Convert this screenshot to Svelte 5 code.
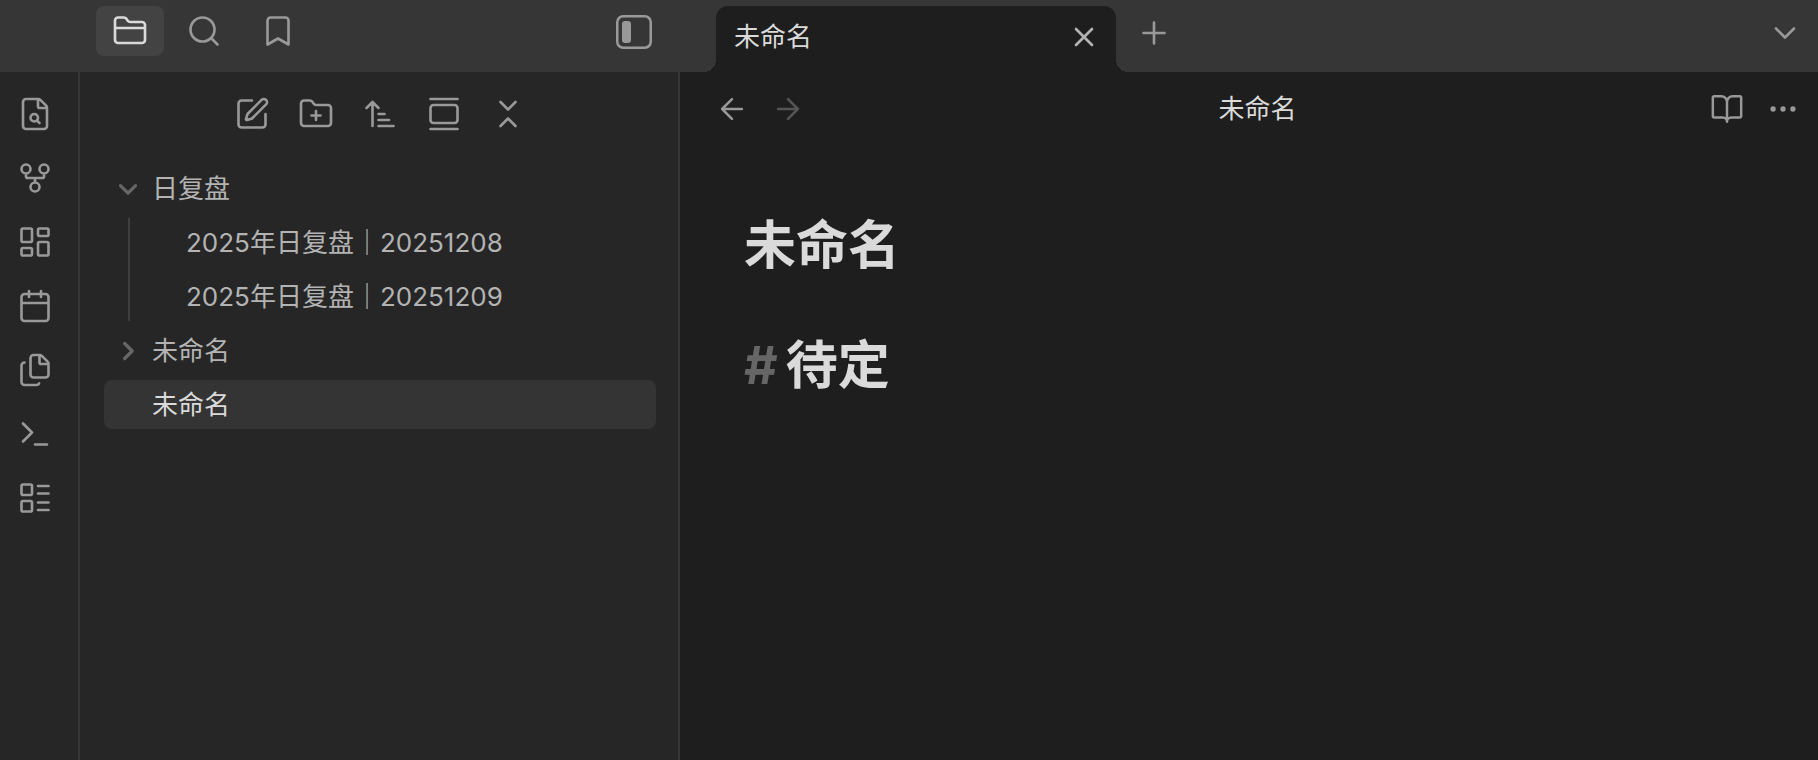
<script lang="ts">
	type IconName = keyof typeof icons;

	// 24x24 stroke icons, one path string each
	const icons = {
		folder:
			'M20 20a2 2 0 0 0 2-2V8a2 2 0 0 0-2-2h-7.9a2 2 0 0 1-1.69-.9L9.6 3.9A2 2 0 0 0 7.93 3H4a2 2 0 0 0-2 2v13a2 2 0 0 0 2 2Z M2 10h20',
		search: 'M19 11a8 8 0 1 1-16 0a8 8 0 1 1 16 0z m2 10-4.3-4.3',
		bookmark: 'm19 21-7-4-7 4V5a2 2 0 0 1 2-2h10a2 2 0 0 1 2 2v16z',
		fileSearch:
			'M6 22a2 2 0 0 1-2-2V4a2 2 0 0 1 2-2h8a2.4 2.4 0 0 1 1.704.706l3.588 3.588A2.4 2.4 0 0 1 20 8v12a2 2 0 0 1-2 2z M14 2v5a1 1 0 0 0 1 1h5 M14 14.5a2.5 2.5 0 1 1-5 0a2.5 2.5 0 1 1 5 0z M13.3 16.3 15 18',
		graph:
			'M15 18a3 3 0 1 1-6 0a3 3 0 1 1 6 0z M9 6a3 3 0 1 1-6 0a3 3 0 1 1 6 0z M21 6a3 3 0 1 1-6 0a3 3 0 1 1 6 0z M18 9v2c0 .6-.4 1-1 1H7c-.6 0-1-.4-1-1V9 M12 12v3',
		canvas:
			'M4 3h5a1 1 0 0 1 1 1v7a1 1 0 0 1-1 1H4a1 1 0 0 1-1-1V4a1 1 0 0 1 1-1z M15 3h5a1 1 0 0 1 1 1v3a1 1 0 0 1-1 1h-5a1 1 0 0 1-1-1V4a1 1 0 0 1 1-1z M15 12h5a1 1 0 0 1 1 1v7a1 1 0 0 1-1 1h-5a1 1 0 0 1-1-1v-7a1 1 0 0 1 1-1z M4 16h5a1 1 0 0 1 1 1v3a1 1 0 0 1-1 1H4a1 1 0 0 1-1-1v-3a1 1 0 0 1 1-1z',
		calendar:
			'M8 2v4 M16 2v4 M5 4h14a2 2 0 0 1 2 2v14a2 2 0 0 1-2 2H5a2 2 0 0 1-2-2V6a2 2 0 0 1 2-2z M3 10h18',
		files:
			'M15 2h-4a2 2 0 0 0-2 2v11a2 2 0 0 0 2 2h8a2 2 0 0 0 2-2V8 M16.706 2.706A2.4 2.4 0 0 0 15 2v5a1 1 0 0 0 1 1h5a2.4 2.4 0 0 0-.706-1.706z M5 7a2 2 0 0 0-2 2v11a2 2 0 0 0 2 2h8a2 2 0 0 0 1.732-1',
		terminal: 'm4 17 6-6-6-6 M12 19h8',
		list: 'M4 3h5a1 1 0 0 1 1 1v5a1 1 0 0 1-1 1H4a1 1 0 0 1-1-1V4a1 1 0 0 1 1-1z M4 14h5a1 1 0 0 1 1 1v5a1 1 0 0 1-1 1H4a1 1 0 0 1-1-1v-5a1 1 0 0 1 1-1z M14 4h7 M14 9h7 M14 15h7 M14 20h7',
		edit: 'M12 3H5a2 2 0 0 0-2 2v14a2 2 0 0 0 2 2h14a2 2 0 0 0 2-2v-7 M18.375 2.625a1 1 0 0 1 3 3l-9.013 9.014a2 2 0 0 1-.853.505l-2.873.84a.5.5 0 0 1-.62-.62l.84-2.873a2 2 0 0 1 .506-.852z',
		folderPlus:
			'M12 10v6 M9 13h6 M20 20a2 2 0 0 0 2-2V8a2 2 0 0 0-2-2h-7.9a2 2 0 0 1-1.69-.9L9.6 3.9A2 2 0 0 0 7.93 3H4a2 2 0 0 0-2 2v13a2 2 0 0 0 2 2Z',
		sort: 'm3 8 4-4 4 4 M7 4v16 M11 12h4 M11 16h7 M11 20h10',
		gallery: 'M3 2h18 M5 6h14a2 2 0 0 1 2 2v8a2 2 0 0 1-2 2H5a2 2 0 0 1-2-2V8a2 2 0 0 1 2-2z M3 22h18',
		collapse: 'm7 20 5-5 5 5 M7 4l5 5 5-5',
		close: 'M18 6 6 18 M6 6l12 12',
		plus: 'M5 12h14 M12 5v14',
		chevron: 'm6 9 6 6 6-6',
		back: 'm12 19-7-7 7-7 M19 12H5',
		forward: 'M5 12h14 M12 5l7 7-7 7',
		book: 'M12 7v14 M3 18a1 1 0 0 1-1-1V4a1 1 0 0 1 1-1h5a4 4 0 0 1 4 4 4 4 0 0 1 4-4h5a1 1 0 0 1 1 1v13a1 1 0 0 1-1 1h-6a3 3 0 0 0-3 3 3 3 0 0 0-3-3z',
		more: 'M13 12a1 1 0 1 1-2 0a1 1 0 1 1 2 0z M20 12a1 1 0 1 1-2 0a1 1 0 1 1 2 0z M6 12a1 1 0 1 1-2 0a1 1 0 1 1 2 0z'
	};

	const panels: { icon: IconName; label: string }[] = [
		{ icon: 'folder', label: '文件列表' },
		{ icon: 'search', label: '搜索' },
		{ icon: 'bookmark', label: '书签' }
	];

	const ribbon: { icon: IconName; label: string }[] = [
		{ icon: 'fileSearch', label: '快速切换' },
		{ icon: 'graph', label: '关系图谱' },
		{ icon: 'canvas', label: '新建白板' },
		{ icon: 'calendar', label: '今天的日记' },
		{ icon: 'files', label: '插入模板' },
		{ icon: 'terminal', label: '命令面板' },
		{ icon: 'list', label: '新建数据库' }
	];

	const actions: { icon: IconName; label: string }[] = [
		{ icon: 'edit', label: '新建笔记' },
		{ icon: 'folderPlus', label: '新建文件夹' },
		{ icon: 'sort', label: '排序' },
		{ icon: 'gallery', label: '自动定位当前文件' },
		{ icon: 'collapse', label: '全部折叠' }
	];

	let folders = $state([
		{ name: '日复盘', open: true, files: ['2025年日复盘｜20251208', '2025年日复盘｜20251209'] },
		{ name: '未命名', open: false, files: [] as string[] }
	]);
	let activePanel = $state<IconName>('folder');
	let activeFile = $state('未命名');
</script>

{#snippet icon(name: IconName, size = 36)}
	<svg class="icon" width={size} height={size} viewBox="0 0 24 24" aria-hidden="true">
		<path d={icons[name]} />
	</svg>
{/snippet}

<div class="app">
	<header class="titlebar">
		<div class="panel-tabs">
			{#each panels as panel (panel.icon)}
				<button
					class="panel-tab"
					class:active={activePanel === panel.icon}
					aria-label={panel.label}
					onclick={() => (activePanel = panel.icon)}
				>
					{@render icon(panel.icon)}
				</button>
			{/each}
			<button class="icon-btn toggle" aria-label="折叠侧边栏">
				<svg width="36" height="34" viewBox="0 0 36 34" aria-hidden="true">
					<rect x="1.25" y="1.25" width="33.5" height="31.5" rx="6" fill="none" stroke="currentColor" stroke-width="2.5" />
					<rect x="6" y="6" width="9" height="22" rx="3" fill="currentColor" />
				</svg>
			</button>
		</div>
		<div class="tabs">
			<div class="tab">
				<span class="tab-title">{activeFile}</span>
				<button class="icon-btn close" aria-label="关闭">{@render icon('close', 32)}</button>
			</div>
			<button class="icon-btn new-tab" aria-label="新标签页">{@render icon('plus')}</button>
			<button class="icon-btn tab-list" aria-label="标签页列表">{@render icon('chevron')}</button>
		</div>
	</header>

	<div class="workspace">
		<nav class="ribbon">
			{#each ribbon as item (item.icon)}
				<button class="icon-btn" aria-label={item.label}>{@render icon(item.icon)}</button>
			{/each}
		</nav>

		<aside class="explorer">
			<div class="actions">
				{#each actions as action (action.icon)}
					<button class="icon-btn" aria-label={action.label}>{@render icon(action.icon)}</button>
				{/each}
			</div>
			<div class="tree">
				{#each folders as folder (folder.name)}
					<button class="row" aria-expanded={folder.open} onclick={() => (folder.open = !folder.open)}>
						<svg class="caret" class:closed={!folder.open} width="20" height="20" viewBox="0 0 24 24" aria-hidden="true">
							<path d="M3 8l9 9 9-9" />
						</svg>
						{folder.name}
					</button>
					{#if folder.open && folder.files.length}
						<div class="children">
							{#each folder.files as file (file)}
								<button class="row" class:active={activeFile === file} onclick={() => (activeFile = file)}>
									{file}
								</button>
							{/each}
						</div>
					{/if}
				{/each}
				<button class="row file" class:active={activeFile === '未命名'} onclick={() => (activeFile = '未命名')}>
					未命名
				</button>
			</div>
		</aside>

		<main class="view">
			<div class="view-header">
				<button class="icon-btn" aria-label="后退">{@render icon('back', 34)}</button>
				<button class="icon-btn" aria-label="前进" disabled>{@render icon('forward', 34)}</button>
				<div class="view-title">{activeFile}</div>
				<button class="icon-btn" aria-label="阅读视图">{@render icon('book', 34)}</button>
				<button class="icon-btn" aria-label="更多选项">{@render icon('more', 34)}</button>
			</div>
			<article class="note">
				<h1>{activeFile}</h1>
				<h2><span class="mark">#</span> 待定</h2>
			</article>
		</main>
	</div>
</div>

<style>
	:global(body) {
		background: #1e1e1e;
	}
	.app {
		display: flex;
		flex-direction: column;
		min-height: 100vh;
		color: #dadada;
		font-family: Inter, 'Noto Sans CJK SC', sans-serif;
		font-size: 26px;
		line-height: 34px;
	}
	button {
		font: inherit;
		color: #b3b3b3;
		background: none;
		border: none;
		padding: 0;
		cursor: pointer;
	}
	.icon {
		display: block;
		fill: none;
		stroke: currentColor;
		stroke-width: 1.75;
		stroke-linecap: round;
		stroke-linejoin: round;
	}
	.icon-btn,
	.panel-tab {
		display: flex;
		align-items: center;
		justify-content: center;
		flex: none;
		width: 52px;
		height: 52px;
		color: #999;
		border-radius: 8px;
	}
	.icon-btn:disabled {
		color: #555;
		cursor: default;
	}

	.titlebar {
		display: flex;
		height: 72px;
		background: #363636;
	}
	.panel-tabs {
		display: flex;
		gap: 6px;
		flex: none;
		box-sizing: border-box;
		width: 680px;
		padding: 6px 20px 0 96px;
	}
	.panel-tab {
		width: 68px;
		height: 50px;
	}
	.panel-tab.active {
		background: #434343;
		color: #dadada;
	}
	.toggle {
		margin-left: auto;
	}
	.tabs {
		display: flex;
		align-items: flex-end;
		flex: 1;
		min-width: 0;
		padding: 0 7px 0 36px;
	}
	.tab {
		position: relative;
		display: flex;
		align-items: center;
		flex: 0 1 400px;
		box-sizing: border-box;
		height: 66px;
		padding: 0 6px 4px 18px;
		background: #1e1e1e;
		border-radius: 12px 12px 0 0;
	}
	/* curved feet joining the tab to the view below */
	.tab::before,
	.tab::after {
		content: '';
		position: absolute;
		bottom: 0;
		width: 12px;
		height: 12px;
	}
	.tab::before {
		right: 100%;
		background: radial-gradient(circle at 0 0, transparent 12px, #1e1e1e 12px);
	}
	.tab::after {
		left: 100%;
		background: radial-gradient(circle at 100% 0, transparent 12px, #1e1e1e 12px);
	}
	.tab-title {
		flex: 1;
	}
	.tab .close {
		color: #b3b3b3;
	}
	.close .icon {
		stroke-width: 2;
	}
	.new-tab,
	.tab-list {
		align-self: flex-start;
		margin-top: 7px;
	}
	.new-tab {
		margin-left: 12px;
	}
	.tab-list {
		margin-left: auto;
	}

	.workspace {
		display: flex;
		flex: 1;
	}
	.ribbon {
		display: flex;
		flex-direction: column;
		gap: 12px;
		flex: none;
		box-sizing: border-box;
		width: 80px;
		padding: 16px 9px;
		background: #262626;
		border-right: 2px solid #363636;
	}
	.explorer {
		flex: none;
		box-sizing: border-box;
		width: 600px;
		background: #262626;
		border-right: 2px solid #363636;
	}
	.actions {
		display: flex;
		justify-content: center;
		gap: 12px;
		padding: 16px 0 24px 2px;
	}
	.tree {
		display: flex;
		flex-direction: column;
		gap: 5px;
		padding: 0 22px 0 24px;
	}
	.row {
		display: flex;
		align-items: center;
		height: 49px;
		padding: 0 14px;
		border-radius: 8px;
		text-align: left;
		white-space: nowrap;
	}
	.row.file {
		padding-left: 48px;
	}
	.row.active {
		background: #343434;
		color: #dadada;
	}
	.caret {
		margin-right: 14px;
		fill: none;
		stroke: #666;
		stroke-width: 4;
		stroke-linecap: round;
		stroke-linejoin: round;
	}
	.caret.closed {
		transform: rotate(-90deg);
	}
	.children {
		display: flex;
		flex-direction: column;
		gap: 5px;
		margin-left: 24px;
		padding-left: 42px;
		border-left: 2px solid #3f3f3f;
	}

	.view {
		flex: 1;
		min-width: 0;
		background: #1e1e1e;
	}
	.view-header {
		display: flex;
		align-items: center;
		gap: 4px;
		height: 74px;
		padding: 0 9px 0 26px;
	}
	.view-title {
		flex: 1;
		text-align: center;
	}
	.note {
		padding: 68px 64px;
	}
	h1,
	h2 {
		margin: 0;
		font-size: 52px;
		line-height: 64px;
		font-weight: 700;
	}
	h2 {
		display: flex;
		gap: 8px;
		margin-top: 56px;
	}
	.mark {
		color: #666;
	}
</style>
